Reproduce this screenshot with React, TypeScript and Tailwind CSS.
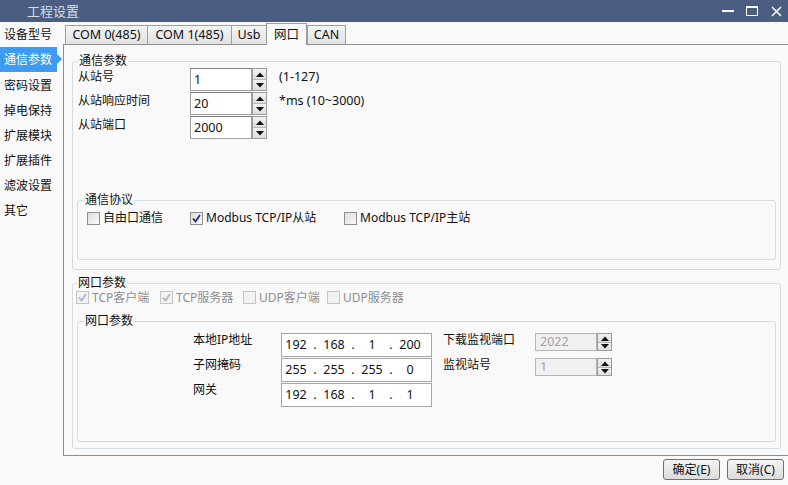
import React from 'react';

const SIDE_ITEMS = ['设备型号', '通信参数', '密码设置', '掉电保持', '扩展模块', '扩展插件', '滤波设置', '其它'];

const TABS = [
  { label: 'COM 0(485)', w: 'w-[82px]' },
  { label: 'COM 1(485)', w: 'w-[84px]' },
  { label: 'Usb', w: 'w-[35px]' },
  { label: '网口', w: 'w-[41px]', active: true },
  { label: 'CAN', w: 'w-[39px]' },
];

function Arrow({ up }: { up?: boolean }) {
  return (
    <svg width="8" height="5" viewBox="0 0 8 5" className="block">
      <polygon points={up ? '0,5 4,0.5 8,5' : '0,0 8,0 4,4.5'} fill="#111" />
    </svg>
  );
}

function Spinner({ small }: { small?: boolean }) {
  const half = small ? 'h-[9px]' : 'h-[11px]';
  return (
    <div className={`flex flex-col w-[15px] border border-[#9b9b9b] bg-[#e9e9e9] ${small ? 'h-[18px]' : 'h-[23px]'}`}>
      <div className={`${half} flex items-center justify-center border-b border-[#b5b5b5] bg-gradient-to-b from-[#f2f2f2] to-[#dedede]`}>
        <Arrow up />
      </div>
      <div className="flex-1 flex items-center justify-center bg-gradient-to-b from-[#f2f2f2] to-[#dedede]">
        <Arrow />
      </div>
    </div>
  );
}

function Check({ checked, disabled, label }: { checked?: boolean; disabled?: boolean; label: string }) {
  return (
    <div className="flex items-center gap-[3px]">
      <div
        className={`w-[13px] h-[13px] border flex items-center justify-center ${
          disabled ? 'border-[#c4c4c4] bg-[#f2f2f2]' : 'border-[#8e8f8f] bg-gradient-to-br from-[#dcdcdc] to-[#fbfbfb]'
        }`}
      >
        {checked && (
          <svg width="9" height="9" viewBox="0 0 9 9">
            <path d="M1 4.5 L3.5 7.5 L8 1" stroke={disabled ? '#b0b6c6' : '#232a8e'} strokeWidth="1.8" fill="none" />
          </svg>
        )}
      </div>
      <span className={disabled ? 'text-[#8f8f8f]' : 'text-[#111]'}>{label}</span>
    </div>
  );
}

function IpBox({ parts }: { parts: string[] }) {
  return (
    <div className="w-[151px] h-[24px] border border-[#a6a6a6] bg-white flex items-center text-[12.5px] text-[#111]">
      <span className="w-[28px] text-center">{parts[0]}</span>
      <span className="w-[10px] text-center">.</span>
      <span className="w-[28px] text-center">{parts[1]}</span>
      <span className="w-[10px] text-center">.</span>
      <span className="w-[28px] text-center">{parts[2]}</span>
      <span className="w-[10px] text-center">.</span>
      <span className="w-[28px] text-center">{parts[3]}</span>
    </div>
  );
}

export default function App() {
  return (
    <div className="w-[788px] h-[485px] bg-[#f9f9f9] overflow-hidden text-[12px] leading-[14px] text-[#111] font-['Noto_Sans','Noto_Sans_CJK_SC',sans-serif]">
      {/* Title bar */}
      <div className="h-[22px] bg-[#4b5d80] flex items-center justify-between">
        <span className="pl-[27px] text-[13px] text-[#d9dee7]">工程设置</span>
        <div className="flex items-center h-full">
          <div className="w-[12px] h-[2px] bg-white mr-[12px]" />
          <div className="w-[12px] h-[10px] border border-white border-t-[2px] mr-[13px]" />
          <svg width="11" height="11" viewBox="0 0 11 11" className="mr-[6px]">
            <path d="M1 1 L10 10 M10 1 L1 10" stroke="#fff" strokeWidth="1.5" />
          </svg>
        </div>
      </div>

      <div className="flex">
        {/* Sidebar */}
        <div className="w-[63px] flex flex-col">
          {SIDE_ITEMS.map((item, i) =>
            i === 1 ? (
              <div key={item} className="relative h-[25px] w-[57px] bg-[#3d9bf1] text-white flex items-center pl-[4px]">
                {item}
                <div className="absolute right-[-5px] top-[7px] w-0 h-0 border-y-[5px] border-y-transparent border-l-[5px] border-l-[#3d9bf1]" />
              </div>
            ) : (
              <div key={item} className={`h-[25px] flex items-center pl-[4px] ${i === 2 ? 'mt-[1px]' : ''}`}>
                {item}
              </div>
            )
          )}
        </div>

        {/* Main */}
        <div className="flex-1 flex flex-col">
          {/* Tabs */}
          <div className="flex items-end h-[22px] pl-[2px]">
            {TABS.map((t) =>
              t.active ? (
                <div
                  key={t.label}
                  className={`${t.w} h-[22px] -mb-[1px] relative z-10 border border-b-0 border-[#9a9a9a] bg-[#f9f9f9] flex items-center justify-center text-[12.5px]`}
                >
                  {t.label}
                </div>
              ) : (
                <div
                  key={t.label}
                  className={`${t.w} h-[19px] border border-b-0 border-r-0 last:border-r border-[#a0a0a0] bg-gradient-to-b from-[#f3f3f3] to-[#e2e2e2] flex items-center justify-center text-[12.5px]`}
                >
                  {t.label}
                </div>
              )
            )}
          </div>

          {/* Panel */}
          <div className="border-t border-l border-b border-[#8e8e8e] pt-[9px] pl-[8px] pr-[7px] pb-[6px]">
            {/* 通信参数 */}
            <fieldset className="border border-[#d3dde5] rounded-[3px]">
              <legend className="ml-[5px] px-[1px]">通信参数</legend>
              {[
                { label: '从站号', value: '1', hint: '(1-127)' },
                { label: '从站响应时间', value: '20', hint: '*ms (10~3000)' },
                { label: '从站端口', value: '2000', hint: '' },
              ].map((r) => (
                <div key={r.label} className="flex h-[24px] pl-[5px]">
                  <div className="w-[112px] pt-[2px]">{r.label}</div>
                  <div className="w-[62px] h-[23px] border border-[#9f9f9f] border-t-[#7d7d7d] bg-white flex items-end pl-[3px] pb-[3px] text-[12.5px]">
                    {r.value}
                  </div>
                  <Spinner />
                  <div className="ml-[12px] pt-[2px] text-[12.5px]">{r.hint}</div>
                </div>
              ))}

              <fieldset className="mx-[4px] mt-[53px] mb-[9px] border border-[#d3dde5] rounded-[3px]">
                <legend className="ml-[6px] px-[1px]">通信协议</legend>
                <div className="flex items-center h-[16px] mt-[3px] mb-[33px] pl-[9px]">
                  <div className="w-[103px]">
                    <Check label="自由口通信" />
                  </div>
                  <div className="w-[154px]">
                    <Check checked label="Modbus TCP/IP从站" />
                  </div>
                  <Check label="Modbus TCP/IP主站" />
                </div>
              </fieldset>
            </fieldset>

            {/* 网口参数 */}
            <fieldset className="mt-[7px] border border-[#d3dde5] rounded-[3px]">
              <legend className="ml-[4px] px-[1px] leading-[12px]">网口参数</legend>
              <div className="flex items-center h-[15px] pl-[3px] pt-[2px] leading-[13px]">
                <div className="w-[84px]">
                  <Check checked disabled label="TCP客户端" />
                </div>
                <div className="w-[83px]">
                  <Check checked disabled label="TCP服务器" />
                </div>
                <div className="w-[84px]">
                  <Check disabled label="UDP客户端" />
                </div>
                <Check disabled label="UDP服务器" />
              </div>

              <fieldset className="mx-[4px] mt-[10px] mb-[6px] border border-[#d3dde5] rounded-[3px]">
                <legend className="ml-[6px] px-[1px]">网口参数</legend>
                <div className="mt-[5px] mb-[34px] pl-[115px] flex flex-col gap-[1px]">
                  <div className="flex h-[24px]">
                    <div className="w-[88px]">本地IP地址</div>
                    <IpBox parts={['192', '168', '1', '200']} />
                    <div className="w-[92px] ml-[11px]">下载监视端口</div>
                    <div className="w-[62px] h-[18px] border border-[#b4b4b4] bg-[#f0f0f0] text-[#a3a3a3] text-[12.5px] pl-[4px] flex items-center">
                      2022
                    </div>
                    <Spinner small />
                  </div>
                  <div className="flex h-[24px]">
                    <div className="w-[88px]">子网掩码</div>
                    <IpBox parts={['255', '255', '255', '0']} />
                    <div className="w-[92px] ml-[11px]">监视站号</div>
                    <div className="w-[62px] h-[18px] border border-[#b4b4b4] bg-[#f0f0f0] text-[#a3a3a3] text-[12.5px] pl-[4px] flex items-center">
                      1
                    </div>
                    <Spinner small />
                  </div>
                  <div className="flex h-[24px]">
                    <div className="w-[88px]">网关</div>
                    <IpBox parts={['192', '168', '1', '1']} />
                  </div>
                </div>
              </fieldset>
            </fieldset>
          </div>

          {/* Buttons */}
          <div className="flex justify-end gap-[7px] pr-[4px] pt-[3px]">
            <button className="w-[57px] h-[21px] border border-[#707070] rounded-[3px] bg-gradient-to-b from-[#f4f4f4] to-[#dcdcdc] text-[12px] leading-[14px] text-[#111]">
              确定(E)
            </button>
            <button className="w-[57px] h-[21px] border border-[#707070] rounded-[3px] bg-gradient-to-b from-[#f4f4f4] to-[#dcdcdc] text-[12px] leading-[14px] text-[#111]">
              取消(C)
            </button>
          </div>
        </div>
      </div>
    </div>
  );
}
